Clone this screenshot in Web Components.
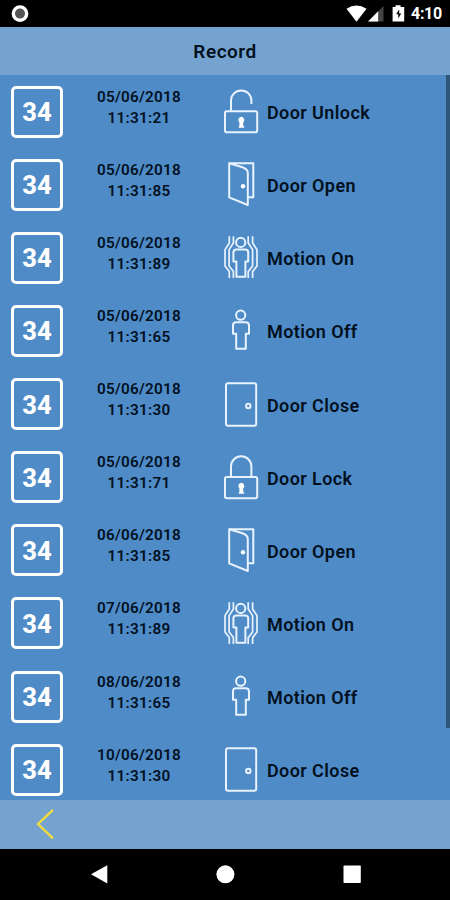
<!DOCTYPE html>
<html lang="en">
<head>
<meta charset="UTF-8">
<meta name="viewport" content="width=device-width, initial-scale=1.0">
<title>Record</title>
<style>
    body {
        margin: 0;
        background: #000;
        font-family: Roboto, "Liberation Sans", sans-serif;
    }
</style>
</head>
<body>
<record-page></record-page>

<script>
const ICONS = {
    'unlock': `
        <rect x="2" y="23.2" width="32.2" height="21" rx="1.8"/>
        <path d="M8 23V12.6a10.2 10.2 0 0 1 20.4 0V16"/>
        <path class="fill" d="M18.2 28.8a3.2 3.2 0 0 1 2 5.6v3.8h1v1.6h-5.4v-1.6h.6v-3.8a3.2 3.2 0 0 1 1.8-5.6z"/>`,
    'lock': `
        <rect x="2" y="23" width="32.2" height="21.3" rx="1.8"/>
        <path d="M8 23V12.4a10.2 10.2 0 0 1 20.4 0V23"/>
        <path class="fill" d="M18.2 28.8a3.2 3.2 0 0 1 2 5.6v3.8h1v1.6h-5.4v-1.6h.6v-3.8a3.2 3.2 0 0 1 1.8-5.6z"/>`,
    'door-open': `
        <path d="M6.2 2.3H30.3V36.2H25"/>
        <path d="M6.2 2.3L19.5 6.3Q24.8 8.3 24.8 12V44L6.2 36.4z"/>
        <circle class="fill" cx="20" cy="25.2" r="2.2"/>`,
    'door-close': `
        <rect x="3" y="2.2" width="30.2" height="42.6" rx="2"/>
        <circle cx="25.3" cy="25" r="2.2"/>`,
    'motion-off': `
        <circle cx="17.7" cy="8.2" r="4.6"/>
        <path d="M13 15.2h9.6q3.4 0 3.4 3.4v8.2h-3.2V41.8H13.2V26.8H10V18.6q0-3.4 3-3.4z"/>`,
    'motion-on': `
        <circle cx="17.7" cy="8.4" r="4.6"/>
        <path d="M13.4 15.6h8.8q3 0 3 3v9h-2.8V42.8H13.4V27.6h-3V18.6q0-3 3-3z"/>
        <g class="wave">
            <path d="M6.3 2.2V9L2 15.6V32L6.3 37.6V44"/>
            <path d="M10.4 2.2V9L6.1 15.6V32L10.4 37.6V44"/>
            <path d="M25.2 2.2V9L29.6 15.6V32L25.2 37.6V44"/>
            <path d="M29.6 2.2V9L34 15.6V32L29.6 37.6V44"/>
        </g>`
};

const RECORDS = [
    { date: '05/06/2018', time: '11:31:21', icon: 'unlock', label: 'Door Unlock' },
    { date: '05/06/2018', time: '11:31:85', icon: 'door-open', label: 'Door Open' },
    { date: '05/06/2018', time: '11:31:89', icon: 'motion-on', label: 'Motion On' },
    { date: '05/06/2018', time: '11:31:65', icon: 'motion-off', label: 'Motion Off' },
    { date: '05/06/2018', time: '11:31:30', icon: 'door-close', label: 'Door Close' },
    { date: '05/06/2018', time: '11:31:71', icon: 'lock', label: 'Door Lock' },
    { date: '06/06/2018', time: '11:31:85', icon: 'door-open', label: 'Door Open' },
    { date: '07/06/2018', time: '11:31:89', icon: 'motion-on', label: 'Motion On' },
    { date: '08/06/2018', time: '11:31:65', icon: 'motion-off', label: 'Motion Off' },
    { date: '10/06/2018', time: '11:31:30', icon: 'door-close', label: 'Door Close' }
];

class StatusBar extends HTMLElement {
    constructor() {
        super();
        this.attachShadow({ mode: 'open' });
        this.shadowRoot.innerHTML = `
            <style>
                :host {
                    display: flex;
                    align-items: center;
                    height: 26.5px;
                    padding: 0 8px 0 11px;
                    box-sizing: border-box;
                    background: #000;
                    color: #fff;
                }
                svg { display: block; }
                .system { margin-left: auto; }
                .clock {
                    width: 31px;
                    margin-left: 6px;
                    font-size: 16px;
                    font-weight: 700;
                    line-height: 26px;
                    letter-spacing: -0.3px;
                    white-space: nowrap;
                    padding-top: 2px;
                }
            </style>
            <svg width="18" height="26" viewBox="0 0 18 26">
                <circle cx="9" cy="13.6" r="6.7" fill="#555" stroke="#fff" stroke-width="3.4"/>
            </svg>
            <svg class="system" width="60" height="26" viewBox="345 0 60 26" fill="#fff">
                <path d="M346.5 8.8Q356.5 2.4 366.5 8.8L356.5 21.8z"/>
                <path d="M383.5 6V21.6H368z" fill="#444"/>
                <path d="M378.2 11.3V21.6H368z"/>
                <path d="M392.6 7h3V5.3h5V7h3.6v14.6H392.6z"/>
                <path d="M399.2 9.4l-3 4.8h2.1v4.4l2.9-5h-2z" fill="#000"/>
            </svg>
            <span class="clock"><slot></slot></span>
        `;
    }
}

class RecordRow extends HTMLElement {
    constructor() {
        super();
        this.attachShadow({ mode: 'open' });
    }

    connectedCallback() {
        this.shadowRoot.innerHTML = `
            <style>
                :host {
                    display: grid;
                    grid-template-columns: 51px 154px 36px 1fr;
                    height: 73.15px;
                    padding-left: 11px;
                    box-sizing: border-box;
                    align-items: start;
                }
                .badge {
                    display: flex;
                    align-items: center;
                    justify-content: center;
                    width: 52px;
                    height: 52px;
                    margin-top: 10.5px;
                    padding-top: 1px;
                    box-sizing: border-box;
                    border: 3px solid #fff;
                    border-radius: 5px;
                    color: #fff;
                    font-size: 25.5px;
                    font-weight: 800;
                }
                .when {
                    padding-top: 11.5px;
                    font-size: 15.3px;
                    font-weight: 600;
                    line-height: 21px;
                    letter-spacing: 0.25px;
                    text-align: center;
                }
                .when div { white-space: nowrap; }
                .icon {
                    display: block;
                    margin: 13px 0 0 7px;
                    fill: none;
                    stroke: #e8f3ff;
                    stroke-width: 2;
                    stroke-linejoin: round;
                }
                .fill { fill: #fff; stroke: none; }
                .wave { stroke-width: 1.7; }
                .label {
                    padding: 13px 0 0 15px;
                    font-size: 18px;
                    font-weight: 600;
                    line-height: 50px;
                    letter-spacing: 0.4px;
                    white-space: nowrap;
                }
            </style>
            <div class="badge">34</div>
            <div class="when">
                <div>${this.getAttribute('date')}</div>
                <div>${this.getAttribute('time')}</div>
            </div>
            <svg class="icon" width="36" height="47" viewBox="0 0 36 47">${ICONS[this.getAttribute('icon')]}</svg>
            <div class="label"><slot></slot></div>
        `;
    }
}

class NavBar extends HTMLElement {
    constructor() {
        super();
        this.attachShadow({ mode: 'open' });
        this.shadowRoot.innerHTML = `
            <style>
                :host { display: block; height: 51.5px; background: #000; }
                svg { display: block; }
            </style>
            <svg width="450" height="51" viewBox="0 0 450 51" fill="#fff">
                <path d="M91 25.3L107.3 16.3V34.5z"/>
                <circle cx="225.4" cy="25.3" r="9"/>
                <rect x="343.5" y="16.5" width="17.3" height="17.6" rx="0.8"/>
            </svg>
        `;
    }
}

class RecordPage extends HTMLElement {
    constructor() {
        super();
        this.attachShadow({ mode: 'open' });
        this.render();
    }

    render() {
        this.shadowRoot.innerHTML = `
            <style>
                :host {
                    display: flex;
                    flex-direction: column;
                    width: 450px;
                    height: 900px;
                    overflow: hidden;
                    background: #4e8bc7;
                    color: #03111f;
                }
                header {
                    flex: none;
                    height: 48.5px;
                    background: #75a3cf;
                    font-size: 19px;
                    font-weight: 600;
                    line-height: 50px;
                    letter-spacing: 0.5px;
                    text-align: center;
                }
                .body {
                    display: flex;
                    flex: 1;
                    min-height: 0;
                    overflow: hidden;
                }
                .list { flex: 1; }
                .scrollbar {
                    width: 4px;
                    height: 653px;
                    background: #2f5579;
                }
                footer {
                    flex: none;
                    height: 48.5px;
                    background: #75a3cf;
                }
                footer svg { display: block; margin-left: 34px; }
                status-bar, nav-bar { flex: none; }
            </style>
            <status-bar>4:10</status-bar>
            <header>Record</header>
            <div class="body">
                <div class="list">
                    ${RECORDS.map(r => `
                        <record-row date="${r.date}" time="${r.time}" icon="${r.icon}">${r.label}</record-row>
                    `).join('')}
                </div>
                <div class="scrollbar"></div>
            </div>
            <footer>
                <svg width="24" height="48" viewBox="0 0 24 48" fill="none" stroke="#f0dc3c" stroke-width="2.4">
                    <path d="M19 9.8L4 24L19 38.3"/>
                </svg>
            </footer>
            <nav-bar></nav-bar>
        `;
    }
}

customElements.define('status-bar', StatusBar);
customElements.define('record-row', RecordRow);
customElements.define('nav-bar', NavBar);
customElements.define('record-page', RecordPage);
</script>
</body>
</html>
